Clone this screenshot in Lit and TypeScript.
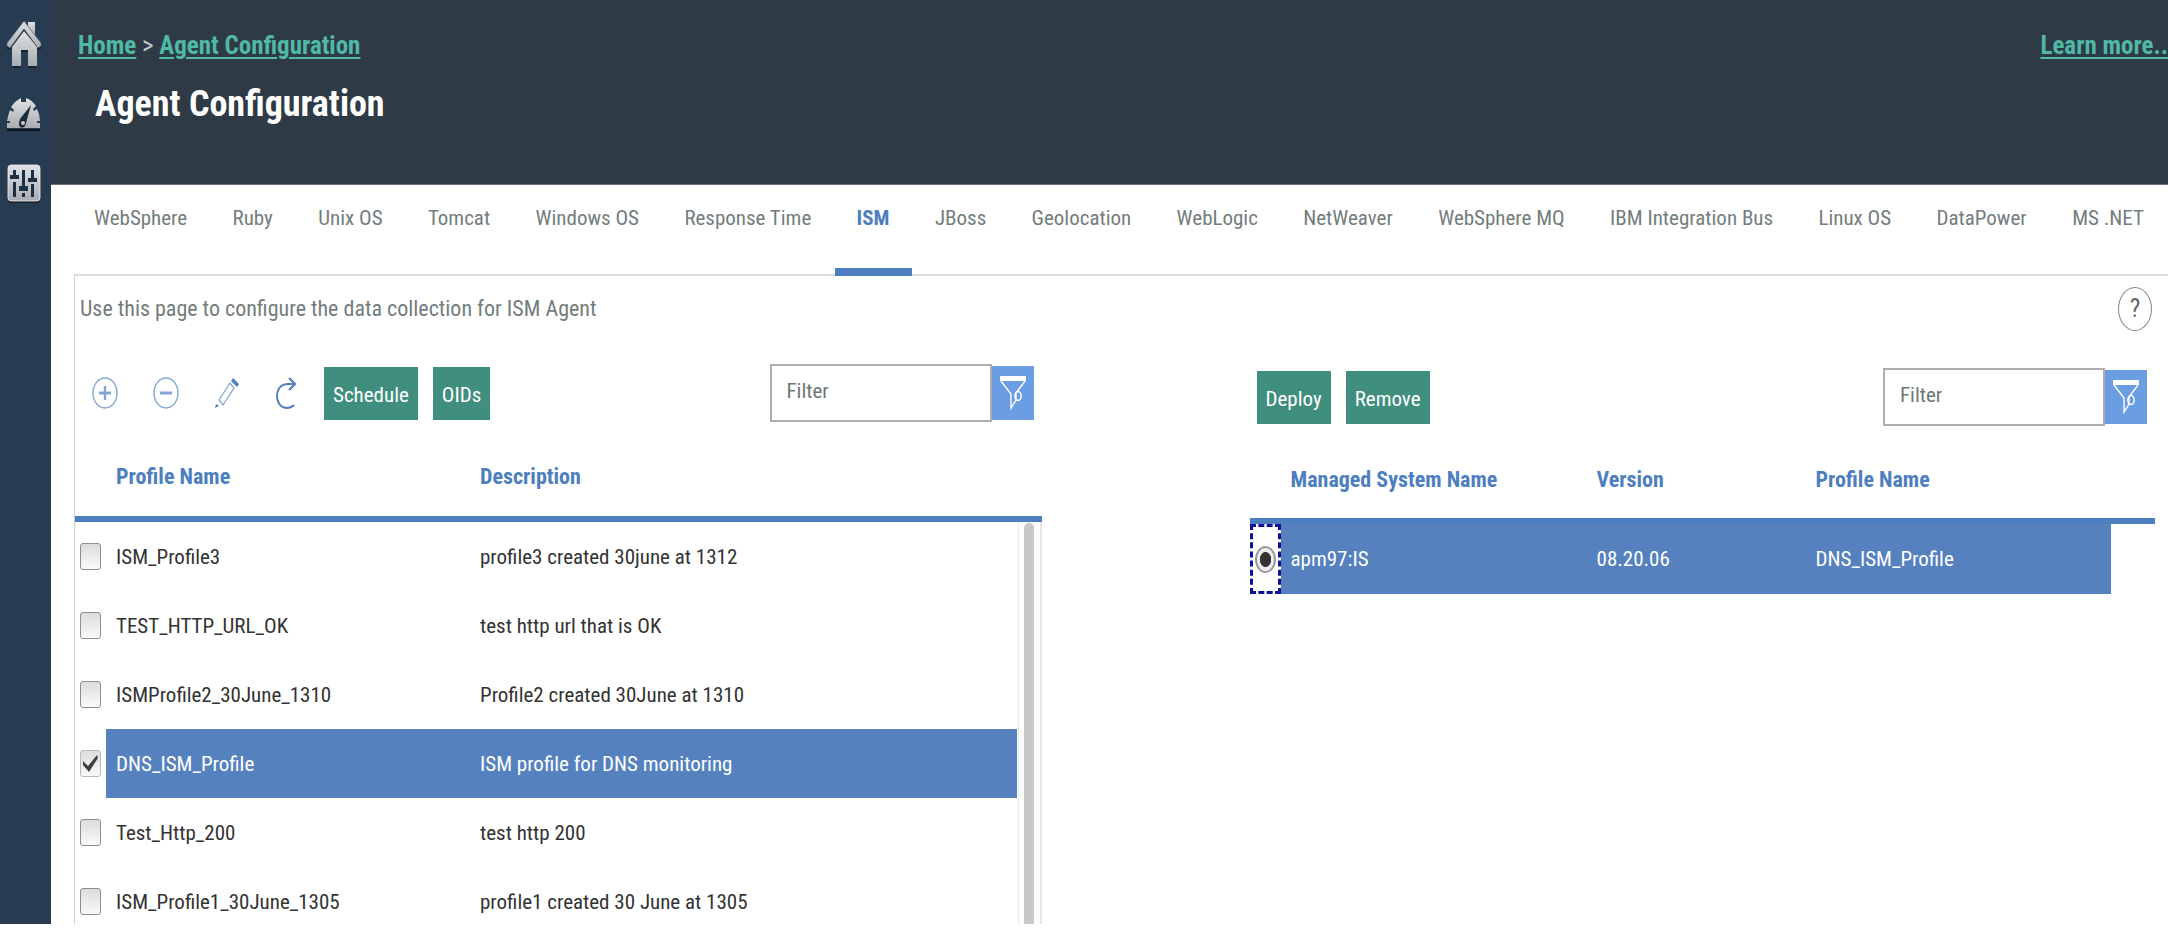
import { LitElement, html, css, svg } from "lit";
import { customElement, state } from "lit/decorators.js";
import { classMap } from "lit/directives/class-map.js";

const TABS = [
  "WebSphere", "Ruby", "Unix OS", "Tomcat", "Windows OS", "Response Time", "ISM", "JBoss",
  "Geolocation", "WebLogic", "NetWeaver", "WebSphere MQ", "IBM Integration Bus", "Linux OS",
  "DataPower", "MS .NET",
];

interface Profile {
  name: string;
  description: string;
}

const PROFILES: Profile[] = [
  { name: "ISM_Profile3", description: "profile3 created 30june at 1312" },
  { name: "TEST_HTTP_URL_OK", description: "test http url that is OK" },
  { name: "ISMProfile2_30June_1310", description: "Profile2 created 30June at 1310" },
  { name: "DNS_ISM_Profile", description: "ISM profile for DNS monitoring" },
  { name: "Test_Http_200", description: "test http 200" },
  { name: "ISM_Profile1_30June_1305", description: "profile1 created 30 June at 1305" },
];

const silver = svg`
  <defs>
    <linearGradient id="g" x1="0" y1="0" x2="0" y2="1">
      <stop offset="0" stop-color="#dfe1e4" />
      <stop offset="1" stop-color="#a9adb3" />
    </linearGradient>
  </defs>`;

const homeIcon = html`
  <svg width="36" height="50" viewBox="0 0 36 50" aria-hidden="true">${silver}
    <path d="M7 28 18 12 30 28V46H22V30H15V46H7Z" fill="#16212c" transform="translate(0 2)" />
    <path d="M1 26 18 6 35 26V29L32 30 18 13 4 30 1 29Z" fill="#16212c" />
    <path d="M22 2H29V15L22 7Z" fill="url(#g)" />
    <path d="M6 27 18 11 31 27V46H22V30H15V46H6Z" fill="url(#g)" />
    <path d="M1 23 18 1 35 23V26L32 28 18 9 4 28 1 26Z" fill="url(#g)" stroke="#4b5765" stroke-width=".6" />
  </svg>`;

const gaugeIcon = html`
  <svg width="36" height="36" viewBox="0 0 36 36" aria-hidden="true">${silver}
    <path d="M1 33H34V35H1Z" fill="#10161c" />
    <path d="M1 32V27H4V25H1Q2 19 4 14L7 16 8 14 5 11Q9 5 15 2V6H20V2Q26 4 30 10L27 13 28 15 31 13Q34 19 34 25H31V27H34V32Z" fill="url(#g)" />
    <path d="M25 9 14 23Q12 28 14 31 19 33 20 27Z" fill="#1d2a38" />
    <circle cx="17" cy="27" r="2" fill="#c6c9cd" />
  </svg>`;

const slidersIcon = html`
  <svg width="34" height="40" viewBox="0 0 34 40" aria-hidden="true">${silver}
    <rect x="1" y="3" width="32" height="36" rx="3" fill="#16212c" />
    <rect x="1" y="1" width="32" height="36" rx="3" fill="url(#g)" stroke="#eceef0" stroke-width=".8" />
    <g fill="#1b3044">
      <path d="M6 6H9V11H12V15H3V11H6ZM6 18H9V33H6Z" />
      <path d="M15 6H18V22H21V27H12V22H15ZM15 29H18V33H15Z" />
      <path d="M24 6H27V14H30V18H21V14H24ZM24 20H27V33H24Z" />
    </g>
  </svg>`;

const plusIcon = html`
  <svg width="26" height="32" viewBox="0 0 26 32" fill="none" aria-hidden="true">
    <ellipse cx="13" cy="16" rx="12" ry="15" stroke="#84a6d4" stroke-width="1.4" />
    <path d="M7 16H19" stroke="#84a6d4" stroke-width="3" /><path d="M13 9V23" stroke="#84a6d4" stroke-width="2.4" />
  </svg>`;

const minusIcon = html`
  <svg width="26" height="32" viewBox="0 0 26 32" fill="none" aria-hidden="true">
    <ellipse cx="13" cy="16" rx="12" ry="15" stroke="#84a6d4" stroke-width="1.4" />
    <path d="M7 16H19" stroke="#84a6d4" stroke-width="3" />
  </svg>`;

const pencilIcon = html`
  <svg width="26" height="32" viewBox="0 0 26 32" aria-hidden="true">
    <path d="M5 23 16 6 20 11 9 28Z" fill="none" stroke="#84a6d4" stroke-width="1.3" />
    <path d="M17 4 19 1 25 7 23 10ZM1 31 2 27 5 29Z" fill="#4d7fc0" />
  </svg>`;

const redoIcon = html`
  <svg width="26" height="34" viewBox="0 0 26 34" fill="none" stroke="#4d7fc0" aria-hidden="true">
    <path d="M20 8H13C6 8 2 13 2 20S6 32 12 32C15 32 17 31 19 29" stroke-width="1.8" />
    <path d="M14 2 20 8 14 14" stroke-width="2.2" />
  </svg>`;

const funnelIcon = html`
  <svg width="28" height="36" viewBox="0 0 28 36" fill="none" stroke="#fff" aria-hidden="true">
    <path d="M1 1H27V6H1Z" fill="#fff" stroke="none" />
    <path d="M2 6 12 19V33L17 25V18L26 6" stroke-width="1.4" />
    <ellipse cx="19" cy="21" rx="3.2" ry="4.5" stroke-width="1.5" />
  </svg>`;

@customElement("filter-box")
export class FilterBox extends LitElement {
  static properties = { label: { type: String } };
  declare label: string;

  static styles = css`
    :host { display: flex; align-items: flex-start; }
    .field {
      box-sizing: border-box;
      width: 222px;
      height: 58px;
      padding: 0 15px 5px;
      border: 2px solid #adadad;
      border-radius: 0;
      background: #fff;
      font: 21px/28px "Roboto Condensed", "Liberation Sans", sans-serif;
      color: #5a6464;
    }
    .field::placeholder { color: #6d7777; opacity: 1; }
    .go {
      display: flex;
      align-items: center;
      justify-content: center;
      width: 42px;
      height: 54px;
      margin-top: 2px;
      padding: 0;
      border: 0;
      background: #6b9de3;
    }
  `;

  render() {
    return html`
      <input class="field" type="text" placeholder="Filter" aria-label=${this.label} />
      <button class="go" type="button" aria-label="Apply filter">${funnelIcon}</button>
    `;
  }
}

@customElement("app-root")
export class AppRoot extends LitElement {
  @state() private activeTab = "ISM";
  @state() private checked = new Set(["DNS_ISM_Profile"]);

  static styles = css`
    :host {
      display: flex;
      height: calc(100vh - 10px);
      overflow: hidden;
      background: #fff;
      color: #333;
      font: 21px/28px "Roboto Condensed", "Liberation Sans", sans-serif;
    }
    button { font: inherit; cursor: pointer; }
    .rail {
      display: flex;
      flex: none;
      flex-direction: column;
      align-items: center;
      box-sizing: border-box;
      width: 51px;
      padding: 20px 4px 0 0;
      background: #273c50;
    }
    .rail a { display: block; height: 50px; }
    .rail svg { display: block; }
    .rail .gauge { height: 36px; margin-top: 26px; }
    .rail .sliders { height: 40px; margin-top: 32px; }
    .page { flex: 1; min-width: 0; }
    .top {
      box-sizing: border-box;
      height: 185px;
      padding: 32px 0 0 27px;
      border-bottom: 1px solid #66727d;
      background: #2e3a46;
    }
    .crumbs {
      display: flex;
      justify-content: space-between;
      font-size: 25px;
      font-weight: bold;
      color: #c0c6cc;
    }
    .crumbs a { color: #4fb9a5; text-decoration-thickness: 2px; text-underline-offset: 3px; }
    .sep { font-weight: normal; }
    h1 { margin: 22px 0 0 17px; color: #fff; font-size: 36px; line-height: 44px; }
    .tabs { display: flex; justify-content: space-between; padding: 0 2px 0 21px; height: 91px; }
    .tab {
      padding: 0 22px 17px;
      border: 0;
      border-bottom: 8px solid transparent;
      background: none;
      color: #737d7d;
      white-space: nowrap;
      position: relative;
    }
    .tab.on { border-bottom-color: #4d7fc0; color: #4d7fc0; font-weight: bold; }
    .panel {
      margin: -2px 0 0 23px;
      border-top: 2px solid #dcdcdc;
      border-left: 1px solid #d0d0d0;
    }
    .intro {
      display: flex;
      align-items: center;
      justify-content: space-between;
      height: 66px;
      padding: 0 16px 0 5px;
      color: #737d7d;
      font-size: 22px;
    }
    .intro p { margin: 0; }
    .help {
      width: 34px;
      height: 44px;
      padding: 0;
      border: 1px solid #888;
      border-radius: 50%;
      background: #fff;
      color: #666;
      font-size: 25px;
    }
    .cols { display: grid; grid-template-columns: 966fr 905fr; column-gap: 10%; padding-right: 13px; }
    .bar { display: flex; align-items: center; height: 58px; margin-top: 22px; padding-right: 8px; }
    .bar filter-box { margin-left: auto; }
    .tools { display: flex; align-items: center; gap: 35px; padding-left: 17px; margin-right: 23px; }
    .tool { display: flex; width: 26px; height: 34px; padding: 0; border: 0; align-items: center; background: none; }
    .act {
      height: 53px;
      margin-right: 15px;
      padding: 3px 9px 0;
      border: 0;
      background: #3f8e7e;
      color: #fff;
    }
    .right .bar { margin-top: 26px; padding: 0 8px 0 7px; }
    .list { position: relative; }
    table { width: 100%; border-collapse: separate; border-spacing: 0; table-layout: fixed; }
    th {
      height: 68px;
      padding: 21px 0 5px 10px;
      border-bottom: 6px solid #4d7fc0;
      color: #4d7fc0;
      font-size: 22px;
      text-align: left;
    }
    td { height: 69px; padding: 0 0 0 10px; }
    td.pick { padding: 0; text-align: center; }
    tr.sel td:not(.pick):not(.end) { background: #5581bf; color: #fff; }
    .c-pick { width: 31px; }
    .c-name { width: 364px; }
    .c-bar { width: 25px; }
    .c-ver { width: 219px; }
    .c-sys { width: 306px; }
    .c-end { width: 44px; }
    .right th { height: 66px; }
    .right td { height: 70px; }
    .right td.pick { outline: 3px dashed #10109a; outline-offset: -3px; }
    .box {
      appearance: none;
      display: block;
      width: 21px;
      height: 27px;
      margin: 0 0 0 5px;
      border: 1px solid #8e8e8e;
      border-radius: 3px;
      background: linear-gradient(#dcdcdc, #fafafa);
    }
    .box:checked {
      border-color: #b9b9b9;
      background:
        url("data:image/svg+xml,%3Csvg xmlns='http://www.w3.org/2000/svg' viewBox='0 0 19 25'%3E%3Cpath d='M2 10 7 15 16 4 17 7 8 21 2 14Z' fill='%23404040'/%3E%3C/svg%3E") center / 100% 100% no-repeat,
        linear-gradient(#dcdcdc, #fafafa);
    }
    .radio {
      appearance: none;
      display: block;
      width: 21px;
      height: 27px;
      margin: 0 auto;
      border: 2px solid #9a9a9a;
      border-radius: 50%;
      background: radial-gradient(ellipse 6px 8px at center, #333 0 88%, #eee 100%);
    }
    .track {
      position: absolute;
      top: 100px;
      right: 0;
      bottom: 0;
      box-sizing: border-box;
      width: 24px;
      padding: 1px 6px 0 5px;
      border-left: 1px solid #e8e8e8;
      border-right: 2px solid #e6e6e6;
      background: #fcfcfc;
    }
    .thumb { height: 100%; border-radius: 6px 6px 0 0; background: #c8c8c8; }
  `;

  private toggle(name: string) {
    const next = new Set(this.checked);
    next.has(name) ? next.delete(name) : next.add(name);
    this.checked = next;
  }

  private renderProfile(p: Profile) {
    const on = this.checked.has(p.name);
    return html`
      <tr class=${classMap({ sel: on })}>
        <td class="pick">
          <input class="box" type="checkbox" aria-label=${p.name} .checked=${on} @change=${() => this.toggle(p.name)} />
        </td>
        <td>${p.name}</td>
        <td>${p.description}</td>
        <td class="end"></td>
      </tr>`;
  }

  render() {
    return html`
      <nav class="rail" aria-label="Main">
        <a href="#home" aria-label="Home">${homeIcon}</a>
        <a class="gauge" href="#performance" aria-label="Performance">${gaugeIcon}</a>
        <a class="sliders" href="#configuration" aria-label="System configuration">${slidersIcon}</a>
      </nav>
      <div class="page">
        <header class="top">
          <div class="crumbs">
            <nav aria-label="Breadcrumb"><a href="#home">Home</a><span class="sep"> &gt; </span><a href="#agents">Agent Configuration</a></nav>
            <a href="#learn">Learn more..</a>
          </div>
          <h1>Agent Configuration</h1>
        </header>
        <div class="tabs" role="tablist">
          ${TABS.map((t) => html`
            <button role="tab" type="button" aria-selected=${t === this.activeTab ? "true" : "false"}
              class=${classMap({ tab: true, on: t === this.activeTab })}
              @click=${() => (this.activeTab = t)}>${t}</button>`)}
        </div>
        <main class="panel">
          <div class="intro">
            <p>Use this page to configure the data collection for ISM Agent</p>
            <button class="help" type="button" aria-label="Help">?</button>
          </div>
          <div class="cols">
            <section>
              <div class="bar">
                <div class="tools">
                  <button class="tool" type="button" aria-label="Add">${plusIcon}</button>
                  <button class="tool" type="button" aria-label="Delete">${minusIcon}</button>
                  <button class="tool" type="button" aria-label="Edit">${pencilIcon}</button>
                  <button class="tool" type="button" aria-label="Refresh">${redoIcon}</button>
                </div>
                <button class="act" type="button">Schedule</button>
                <button class="act" type="button">OIDs</button>
                <filter-box label="Filter profiles"></filter-box>
              </div>
              <div class="list">
                <table>
                  <colgroup><col class="c-pick" /><col class="c-name" /><col /><col class="c-bar" /></colgroup>
                  <thead><tr><th></th><th>Profile Name</th><th>Description</th><th></th></tr></thead>
                  <tbody>${PROFILES.map((p) => this.renderProfile(p))}</tbody>
                </table>
                <div class="track"><div class="thumb"></div></div>
              </div>
            </section>
            <section class="right">
              <div class="bar">
                <button class="act" type="button">Deploy</button>
                <button class="act" type="button">Remove</button>
                <filter-box label="Filter managed systems"></filter-box>
              </div>
              <table>
                <colgroup><col class="c-pick" /><col class="c-sys" /><col class="c-ver" /><col /><col class="c-end" /></colgroup>
                <thead><tr><th></th><th>Managed System Name</th><th>Version</th><th>Profile Name</th><th></th></tr></thead>
                <tbody>
                  <tr class="sel">
                    <td class="pick"><input class="radio" type="radio" name="system" aria-label="apm97:IS" checked /></td>
                    <td>apm97:IS</td>
                    <td>08.20.06</td>
                    <td>DNS_ISM_Profile</td>
                    <td class="end"></td>
                  </tr>
                </tbody>
              </table>
            </section>
          </div>
        </main>
      </div>
    `;
  }
}
